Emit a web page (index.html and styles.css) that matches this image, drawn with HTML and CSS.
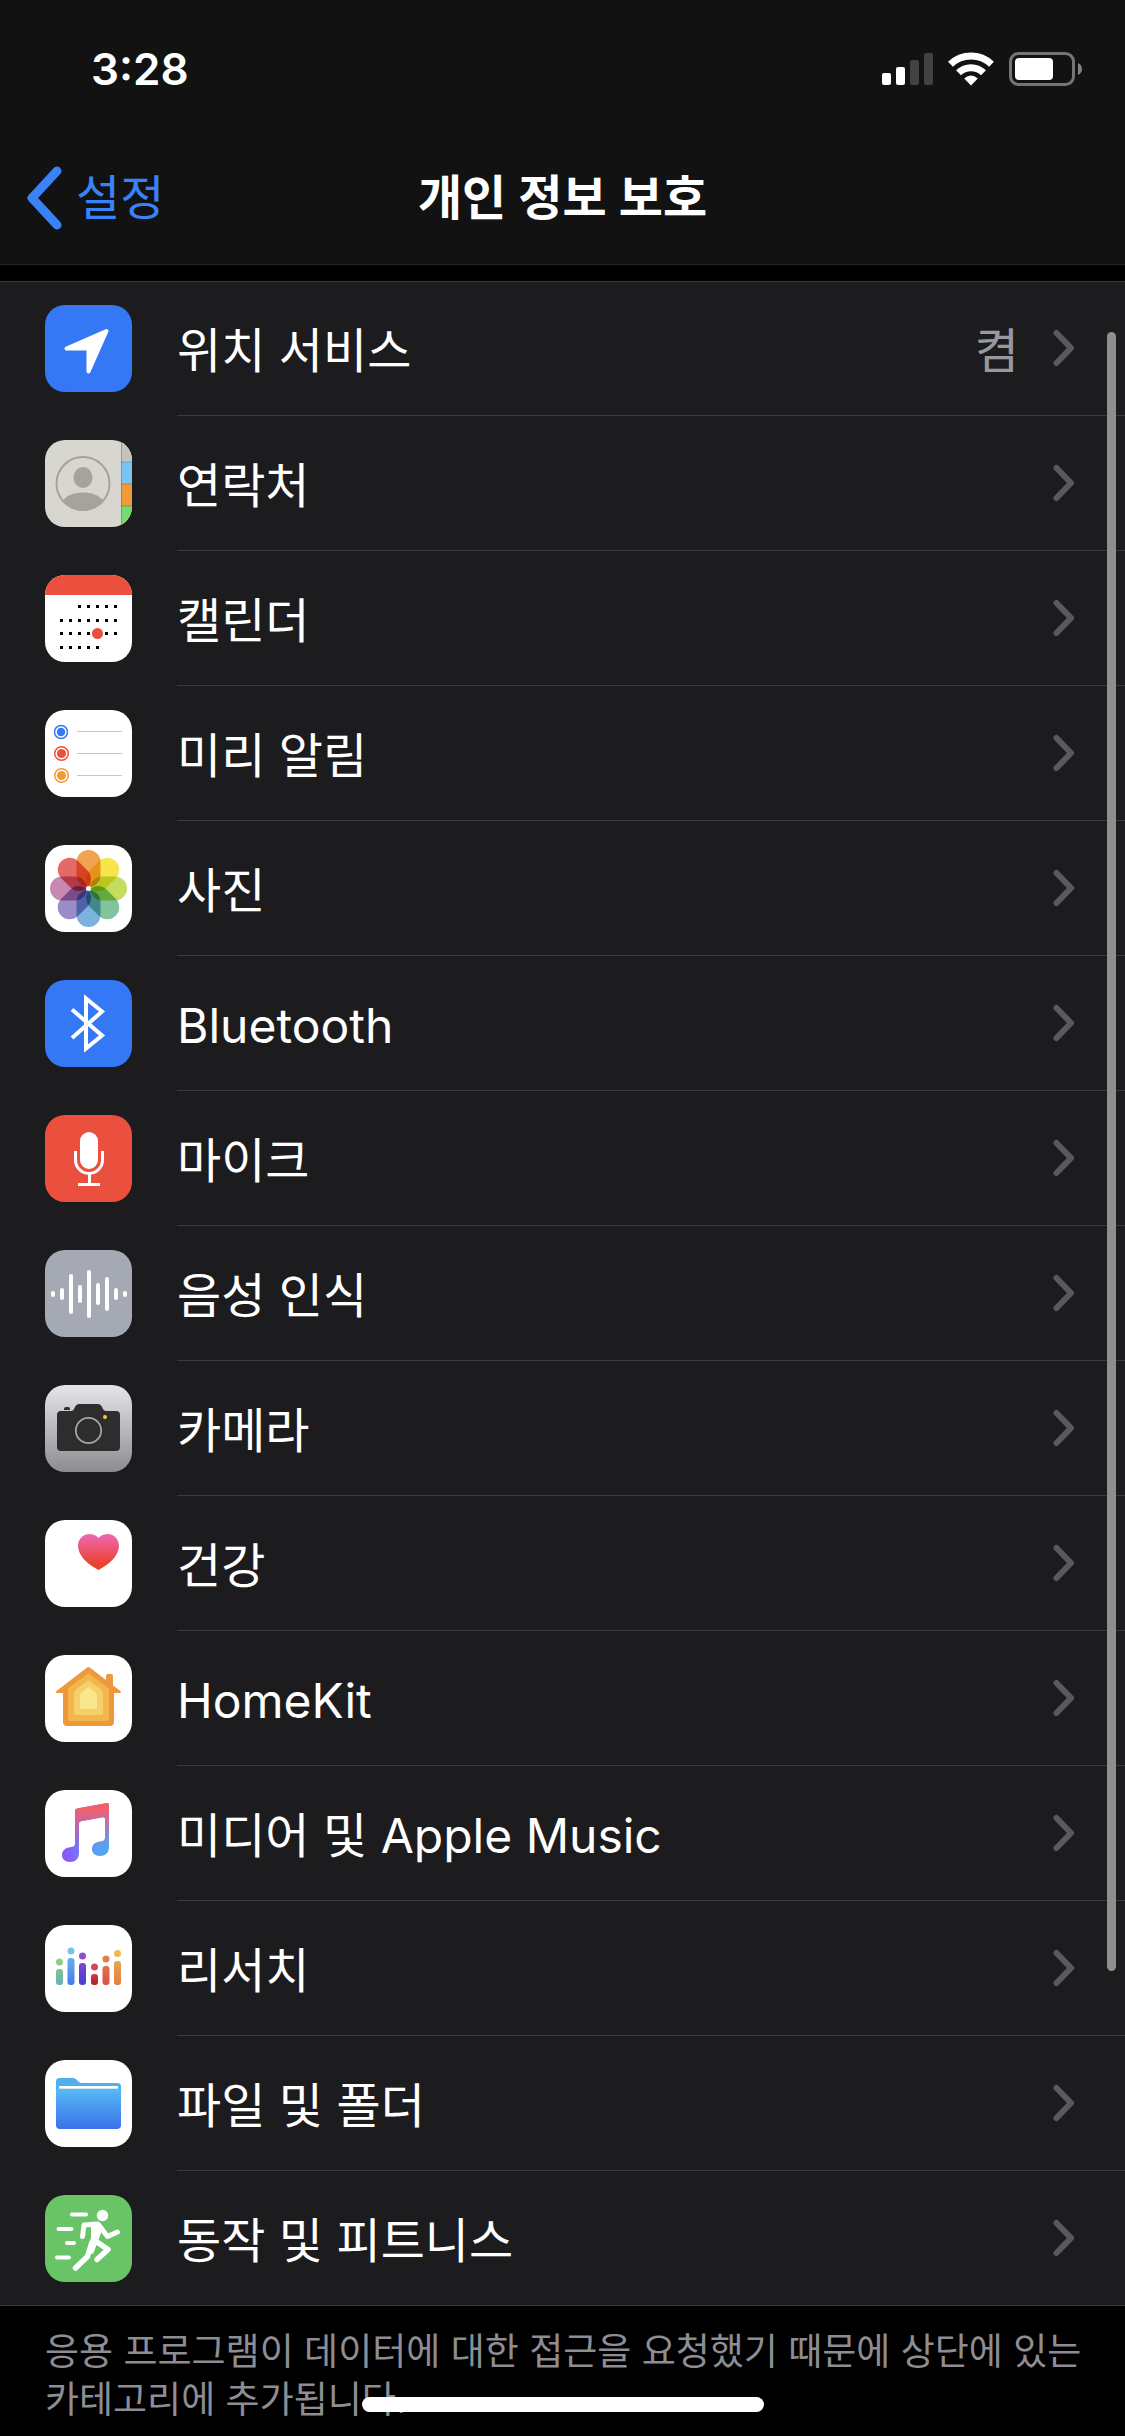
FILE: index.html
```html
<!DOCTYPE html>
<html lang="ko">
<head>
    <meta charset="UTF-8">
    <meta name="viewport" content="width=device-width, initial-scale=1.0">
    <title>개인 정보 보호</title>
    <link rel="stylesheet" href="styles.css">
</head>
<body>
    <header class="header">
        <div class="status-bar">
            <span class="time">3:28</span>
            <div class="status-icons">
                <svg width="51" height="34" viewBox="0 0 51 34" fill="#fff">
                    <rect x="0" y="21" width="9" height="12" rx="2"/>
                    <rect x="14" y="15" width="9" height="18" rx="2"/>
                    <rect x="28" y="8" width="9" height="25" rx="2" fill="#424242"/>
                    <rect x="42" y="1" width="9" height="32" rx="2" fill="#424242"/>
                </svg>
                <svg width="46" height="34" viewBox="0 0 46 34" fill="none" stroke="#fff" stroke-width="7">
                    <path d="M2.5 12.2a29.5 29.5 0 0 1 41 0"/>
                    <path d="M10.5 20.8a18 18 0 0 1 25 0"/>
                    <path d="M23 33.5l-6.8-7q6.8-6 13.6 0z" fill="#fff" stroke="none"/>
                </svg>
                <svg width="73" height="34" viewBox="0 0 73 34">
                    <rect x="1.5" y="1.5" width="63" height="31" rx="8" fill="none" stroke="#747474" stroke-width="3"/>
                    <rect x="6" y="6" width="38" height="22" rx="4" fill="#fff"/>
                    <path d="M69 11q4 2 4 6t-4 6z" fill="#848484"/>
                </svg>
            </div>
        </div>
        <nav class="nav-bar">
            <a class="back" href="#">
                <svg width="36" height="64" viewBox="0 0 36 64" fill="none" stroke="#3a82f7" stroke-width="9" stroke-linecap="round" stroke-linejoin="round">
                    <path d="M31 5L6 32l25 27"/>
                </svg>
                설정
            </a>
            <h1>개인 정보 보호</h1>
        </nav>
    </header>

    <main>
        <ul class="list">
            <li>
                <a class="row" href="#">
                    <svg class="icon blue" viewBox="0 0 87 87">
                        <path d="M61.5 26L21.5 43.5h22V66.5z" fill="#fff" stroke="#fff" stroke-width="4" stroke-linejoin="round"/>
                    </svg>
                    <span class="cell"><span class="label">위치 서비스</span><span class="value">켬</span>
                    <svg class="chevron" viewBox="0 0 22 38"><path d="M3.5 4L18 19 3.5 34"/></svg></span>
                </a>
            </li>
            <li>
                <a class="row" href="#">
                    <svg class="icon" viewBox="0 0 87 87">
                        <rect width="87" height="87" fill="#d7d7cf"/>
                        <rect x="76" width="11" height="22" fill="#c4c4bc"/>
                        <rect x="76" y="22" width="11" height="22" fill="#78c5f5"/>
                        <rect x="76" y="44" width="11" height="22" fill="#f19a37"/>
                        <rect x="76" y="66" width="11" height="21" fill="#78d970"/>
                        <path d="M76.5 0v87M76 22h11M76 44h11M76 66h11" stroke="#000" stroke-opacity=".2"/>
                        <circle cx="38" cy="43.5" r="26.5" fill="none" stroke="#a7a29b" stroke-width="2"/>
                        <ellipse cx="38" cy="37.5" rx="9.5" ry="10.5" fill="#a7a29b"/>
                        <path d="M18.5 60c7-10 32-10 39 0-4 7-12 11-19.5 11s-15.5-4-19.500-11z" fill="#a7a29b"/>
                    </svg>
                    <span class="cell"><span class="label">연락처</span>
                    <svg class="chevron" viewBox="0 0 22 38"><path d="M3.5 4L18 19 3.5 34"/></svg></span>
                </a>
            </li>
            <li>
                <a class="row" href="#">
                    <svg class="icon white" viewBox="0 0 87 87">
                        <rect width="87" height="20" fill="#eb4f3d"/>
                        <path d="M33 31.5h39M15 45.5h57M15 58.5h57M15 72.5h39" stroke="#000" stroke-width="3" stroke-dasharray="3 6"/>
                        <circle cx="52.5" cy="58.5" r="5.5" fill="#eb4f3d"/>
                    </svg>
                    <span class="cell"><span class="label">캘린더</span>
                    <svg class="chevron" viewBox="0 0 22 38"><path d="M3.5 4L18 19 3.5 34"/></svg></span>
                </a>
            </li>
            <li>
                <a class="row" href="#">
                    <svg class="icon white" viewBox="0 0 87 87">
                        <g fill="none" stroke-width="1.5">
                            <circle cx="16" cy="22" r="6.5" stroke="#3478f6"/>
                            <circle cx="16.5" cy="43.5" r="6.8" stroke="#eb4f3d"/>
                            <circle cx="16.5" cy="65.5" r="6.8" stroke="#f19a37"/>
                        </g>
                        <circle cx="16" cy="22" r="4.2" fill="#3478f6"/>
                        <circle cx="16.5" cy="43.5" r="4.5" fill="#eb4f3d"/>
                        <circle cx="16.5" cy="65.5" r="4.5" fill="#f19a37"/>
                        <path d="M32 21.5h45M32 43.5h45M32 65.5h45" stroke="#c4c4ca"/>
                    </svg>
                    <span class="cell"><span class="label">미리 알림</span>
                    <svg class="chevron" viewBox="0 0 22 38"><path d="M3.5 4L18 19 3.5 34"/></svg></span>
                </a>
            </li>
            <li>
                <a class="row" href="#">
                    <svg class="icon white petals" viewBox="0 0 87 87">
                        <rect x="31.5" y="5" width="24" height="37" rx="12" fill="#f0a450"/>
                        <rect x="31.5" y="5" width="24" height="37" rx="12" fill="#f6e54c" transform="rotate(45 43.5 43.5)"/>
                        <rect x="31.5" y="5" width="24" height="37" rx="12" fill="#c4dc60" transform="rotate(90 43.5 43.5)"/>
                        <rect x="31.5" y="5" width="24" height="37" rx="12" fill="#82c4a0" transform="rotate(135 43.5 43.5)"/>
                        <rect x="31.5" y="5" width="24" height="37" rx="12" fill="#7cb2de" transform="rotate(180 43.5 43.5)"/>
                        <rect x="31.5" y="5" width="24" height="37" rx="12" fill="#9a8cc6" transform="rotate(225 43.5 43.5)"/>
                        <rect x="31.5" y="5" width="24" height="37" rx="12" fill="#c888b2" transform="rotate(270 43.5 43.5)"/>
                        <rect x="31.5" y="5" width="24" height="37" rx="12" fill="#e46a68" transform="rotate(315 43.5 43.5)"/>
                        <circle cx="43.5" cy="43.5" r="2.5" fill="#fff"/>
                    </svg>
                    <span class="cell"><span class="label">사진</span>
                    <svg class="chevron" viewBox="0 0 22 38"><path d="M3.5 4L18 19 3.5 34"/></svg></span>
                </a>
            </li>
            <li>
                <a class="row" href="#">
                    <svg class="icon blue" viewBox="0 0 87 87">
                        <path d="M27 29.5l30 26L41 68.5v-50l16 13L27 58" fill="none" stroke="#fff" stroke-width="4"/>
                    </svg>
                    <span class="cell"><span class="label">Bluetooth</span>
                    <svg class="chevron" viewBox="0 0 22 38"><path d="M3.5 4L18 19 3.5 34"/></svg></span>
                </a>
            </li>
            <li>
                <a class="row" href="#">
                    <svg class="icon red" viewBox="0 0 87 87">
                        <rect x="35" y="17" width="18" height="37" rx="9" fill="#fff"/>
                        <path d="M30.5 36v9a13.5 13.5 0 0 0 27 0v-9M44.5 58v12M33 69.5h22" fill="none" stroke="#fff" stroke-width="3"/>
                    </svg>
                    <span class="cell"><span class="label">마이크</span>
                    <svg class="chevron" viewBox="0 0 22 38"><path d="M3.5 4L18 19 3.5 34"/></svg></span>
                </a>
            </li>
            <li>
                <a class="row" href="#">
                    <svg class="icon gray" viewBox="0 0 87 87">
                        <path d="M8 43v2M17 40v8M26 26v36M35 37v14M44 22v44M53 35v18M62 29v30M71 40v8M80 43v2" stroke="#fff" stroke-width="4" stroke-linecap="round"/>
                    </svg>
                    <span class="cell"><span class="label">음성 인식</span>
                    <svg class="chevron" viewBox="0 0 22 38"><path d="M3.5 4L18 19 3.5 34"/></svg></span>
                </a>
            </li>
            <li>
                <a class="row" href="#">
                    <svg class="icon silver" viewBox="0 0 87 87">
                        <path d="M16 26h10q2.5 0 3.5-3 1.5-4 5-4h18q3.5 0 5 4 1 3 3.5 3H71q4 0 4 4v32q0 4-4 4H16q-4 0-4-4V30q0-4 4-4z" fill="#2d2d2d"/>
                        <path d="M19 25v-1q0-2 2-2h2q2 0 2 2v1z" fill="#2d2d2d"/>
                        <circle cx="43.5" cy="45.5" r="12.7" fill="none" stroke="#a4a4aa" stroke-width="1.8"/>
                        <circle cx="60" cy="32" r="2" fill="#f3c93c"/>
                    </svg>
                    <span class="cell"><span class="label">카메라</span>
                    <svg class="chevron" viewBox="0 0 22 38"><path d="M3.5 4L18 19 3.5 34"/></svg></span>
                </a>
            </li>
            <li>
                <a class="row" href="#">
                    <svg class="icon white" viewBox="0 0 87 87">
                        <defs>
                            <linearGradient id="heart" x2="0" y2="1"><stop stop-color="#ee68b4"/><stop offset=".85" stop-color="#eb402d"/></linearGradient>
                        </defs>
                        <path d="M53.5 50C42 44 33 35 33 26c0-7 5-12 11-12 4 0 7.5 1.5 9.5 4 2-2.5 5.5-4 9.5-4 6 0 11 5 11 12 0 9-9 18-20.5 24z" fill="url(#heart)"/>
                    </svg>
                    <span class="cell"><span class="label">건강</span>
                    <svg class="chevron" viewBox="0 0 22 38"><path d="M3.5 4L18 19 3.5 34"/></svg></span>
                </a>
            </li>
            <li>
                <a class="row" href="#">
                    <svg class="icon white" viewBox="0 0 87 87">
                        <path d="M41.5 13q2-2 4 0L61 25v-4q0-2 2-2h3q2 0 2 2v9.5l7.5 5.5q1 2-1 2H69v29q0 4-4 4H22q-4 0-4-4V38h-5.5q-2.5 0-1-2z" fill="#ed983a"/>
                        <path d="M43.5 18L62 32q2 1.500 2 4v28q0 2-2 2H25q-2 0-2-2V36q0-2.500 2-4z" fill="#f3b64d"/>
                        <path d="M43.5 25L56 34.5q2 1.500 2 4V58q0 2-2 2H31q-2 0-2-2V38.5q0-2.500 2-4z" fill="#f6cf6b"/>
                        <path d="M43.5 32l7.5 6q1 1 1 2v12q0 2-2 2H37q-2 0-2-2V40q0-1 1-2z" fill="#fae68c"/>
                    </svg>
                    <span class="cell"><span class="label">HomeKit</span>
                    <svg class="chevron" viewBox="0 0 22 38"><path d="M3.5 4L18 19 3.5 34"/></svg></span>
                </a>
            </li>
            <li>
                <a class="row" href="#">
                    <svg class="icon white" viewBox="0 0 87 87">
                        <defs>
                            <linearGradient id="noteSide"><stop offset=".1" stop-color="#8a5af8"/><stop offset=".8" stop-color="#55a4f3"/></linearGradient>
                            <linearGradient id="noteTop" x2="0" y2="1"><stop offset=".1" stop-color="#f2606c"/><stop offset=".25" stop-color="#e8607c" stop-opacity=".85"/><stop offset=".75" stop-color="#e060a0" stop-opacity="0"/></linearGradient>
                            <path id="note" d="M30 21q0-2 2-2.400L62 13q2-.2 2 2v42c0 6-4 9-9 9s-8-3-8-7c0-5 4-7 8-7.500s5-1.500 5-4.500V29q0-2-2-1.700l-22 4q-2 .4-2 2.200V63c0 6-4 9-9 9s-8-3-8-7c0-5 4-7.200 8-7.700s5-1.300 5-4.300z"/>
                        </defs>
                        <use href="#note" fill="url(#noteSide)"/>
                        <use href="#note" fill="url(#noteTop)"/>
                    </svg>
                    <span class="cell"><span class="label">미디어 및 Apple Music</span>
                    <svg class="chevron" viewBox="0 0 22 38"><path d="M3.5 4L18 19 3.5 34"/></svg></span>
                </a>
            </li>
            <li>
                <a class="row" href="#">
                    <svg class="icon white" viewBox="0 0 87 87">
                        <defs>
                            <linearGradient id="bar1" x2="0" y2="1"><stop stop-color="#7cc48c"/><stop offset="1" stop-color="#6aaec4"/></linearGradient>
                            <linearGradient id="bar2" x2="0" y2="1"><stop stop-color="#64b0ea"/><stop offset="1" stop-color="#4a78f0"/></linearGradient>
                            <linearGradient id="bar3" x2="0" y2="1"><stop stop-color="#7c48cc"/><stop offset="1" stop-color="#4440d0"/></linearGradient>
                            <linearGradient id="bar4" x2="0" y2="1"><stop stop-color="#cc3c4c"/><stop offset="1" stop-color="#a8202c"/></linearGradient>
                            <linearGradient id="bar5" x2="0" y2="1"><stop stop-color="#de7444"/><stop offset="1" stop-color="#dc5048"/></linearGradient>
                            <linearGradient id="bar6" x2="0" y2="1"><stop stop-color="#e6a850"/><stop offset="1" stop-color="#e07c44"/></linearGradient>
                        </defs>
                        <rect x="11" y="44" width="7" height="16" rx="3" fill="url(#bar1)"/>
                        <rect x="22.5" y="33" width="7" height="27" rx="3" fill="url(#bar2)"/>
                        <rect x="34" y="38" width="7" height="22" rx="3" fill="url(#bar3)"/>
                        <rect x="46" y="49" width="7" height="11" rx="3" fill="url(#bar4)"/>
                        <rect x="57.5" y="41" width="7" height="19" rx="3" fill="url(#bar5)"/>
                        <rect x="69" y="36" width="7" height="24" rx="3" fill="url(#bar6)"/>
                        <circle cx="14.5" cy="37" r="3.5" fill="#8ccc84"/>
                        <circle cx="26" cy="26" r="3.5" fill="#74c4ee"/>
                        <circle cx="37.5" cy="31" r="3.5" fill="#8c4cd4"/>
                        <circle cx="49.5" cy="42" r="3.5" fill="#d44858"/>
                        <circle cx="61" cy="34" r="3.5" fill="#e08048"/>
                        <circle cx="72.5" cy="28.5" r="3.5" fill="#ecb850"/>
                    </svg>
                    <span class="cell"><span class="label">리서치</span>
                    <svg class="chevron" viewBox="0 0 22 38"><path d="M3.5 4L18 19 3.5 34"/></svg></span>
                </a>
            </li>
            <li>
                <a class="row" href="#">
                    <svg class="icon white" viewBox="0 0 87 87">
                        <defs>
                            <linearGradient id="folder" x2="0" y2="1"><stop stop-color="#56baf5"/><stop offset="1" stop-color="#3a72e8"/></linearGradient>
                        </defs>
                        <path d="M11 34V21.5q0-3.5 3.5-3.5H28q2 0 3.5 1.5l2.5 2.5q1 1 3 1h35.5q3.5 0 3.5 3.5V34z" fill="#50b0ee"/>
                        <path d="M14 30v-3q0-1 1-1h57q1 0 1 1v3z" fill="#fff"/>
                        <path d="M14 28h59v2H14z" fill="#d4e4f0"/>
                        <path d="M13 29h61q2 0 2 2v34q0 4-4 4H15q-4 0-4-4V31q0-2 2-2z" fill="url(#folder)"/>
                    </svg>
                    <span class="cell"><span class="label">파일 및 폴더</span>
                    <svg class="chevron" viewBox="0 0 22 38"><path d="M3.5 4L18 19 3.5 34"/></svg></span>
                </a>
            </li>
            <li>
                <a class="row" href="#">
                    <svg class="icon green" viewBox="0 0 87 87">
                        <circle cx="57.5" cy="20.5" r="5.7" fill="#fff"/>
                        <g fill="none" stroke="#fff" stroke-linecap="round" stroke-linejoin="round">
                            <path d="M27 19.5h14M13.5 34h13M22 48h7M12 62.5h12" stroke-width="4"/>
                            <path d="M37.5 41.5L39 30l14-1 9.500 12.500L72.5 37" stroke-width="5"/>
                            <path d="M49 45l14 9.500L52 64.5M47 47l-4.500 14.500L30.5 73" stroke-width="5.5"/>
                        </g>
                        <path d="M46 28q6-3 9 1l2.5 5L52 49l-4 10-6-2 4-14z" fill="#fff"/>
                    </svg>
                    <span class="cell"><span class="label">동작 및 피트니스</span>
                    <svg class="chevron" viewBox="0 0 22 38"><path d="M3.5 4L18 19 3.5 34"/></svg></span>
                </a>
            </li>
        </ul>
        <p class="footnote">응용 프로그램이 데이터에 대한 접근을 요청했기 때문에 상단에 있는 카테고리에 추가됩니다.</p>
    </main>

    <div class="scrollbar"></div>
    <div class="home-indicator"></div>
</body>
</html>
```

FILE: styles.css
```css
* {
    box-sizing: border-box;
}

body {
    margin: 0;
    min-height: 100vh;
    background: #000;
    color: #fff;
    font-family: Inter, 'Noto Sans CJK KR', sans-serif;
    font-size: 48px;
    line-height: 60px;
}

a {
    color: inherit;
    text-decoration: none;
}

/* Status bar and title */
.header {
    background: #121212;
    border-bottom: 1px solid #262628;
}

.status-bar {
    display: flex;
    justify-content: space-between;
    align-items: center;
    height: 132px;
    padding: 6px 43px 0 91px;
}

.time {
    font-size: 44px;
    font-weight: 600;
}

.status-icons {
    display: flex;
    gap: 15px;
}

.nav-bar {
    display: grid;
    grid-template-columns: 1fr auto 1fr;
    align-items: center;
    height: 132px;
    padding: 0 26px;
}

.back {
    display: flex;
    align-items: center;
    gap: 14px;
    color: #3a82f7;
}

.nav-bar h1 {
    margin: 0;
    font-size: 48px;
    font-weight: 600;
}

/* Settings list */
.list {
    list-style: none;
    margin: 16px 0 0;
    padding: 0;
    background: #1c1c1e;
    box-shadow: inset 0 1px 0 #3a3a3c;
}

.row {
    display: flex;
    align-items: center;
    gap: 45px;
    height: 135px;
    padding-left: 45px;
}

.list li:last-child .row {
    border-bottom: 1px solid #3a3a3c;
}

.cell {
    flex: 1;
    display: flex;
    align-items: center;
    height: 100%;
    padding-right: 50px;
    border-bottom: 1px solid #3a3a3c;
}

.list li:last-child .cell {
    border-bottom: none;
}

.label,
.value {
    padding-top: 5px;
}

.label {
    flex: 1;
}

.value {
    margin-right: 34px;
    color: #98989f;
}

.chevron {
    width: 22px;
    height: 38px;
    fill: none;
    stroke: #5a5a5e;
    stroke-width: 6;
    stroke-linecap: round;
    stroke-linejoin: round;
}

.icon {
    width: 87px;
    height: 87px;
    border-radius: 20px;
    overflow: hidden;
}

.blue {
    background: #3478f6;
}

.red {
    background: #eb4f3d;
}

.gray {
    background: #a5a9b4;
}

.green {
    background: #68c466;
}

.white {
    background: #fff;
}

.silver {
    background: linear-gradient(to bottom, #e6e6ea, #8c8c91);
}

.petals {
    isolation: isolate;
}

.petals rect {
    mix-blend-mode: multiply;
}

.footnote {
    margin: 0;
    padding: 22px 40px 20px 45px;
    color: #8d8d93;
    font-size: 37px;
    line-height: 48px;
    word-break: keep-all;
}

/* Overlays */
.scrollbar {
    position: fixed;
    top: 332px;
    right: 9px;
    bottom: 465px;
    width: 9px;
    border-radius: 5px;
    background: #8e8e8e;
}

.home-indicator {
    position: fixed;
    left: 50%;
    bottom: 24px;
    width: 402px;
    height: 15px;
    border-radius: 8px;
    background: #fff;
    transform: translateX(-50%);
}
```
